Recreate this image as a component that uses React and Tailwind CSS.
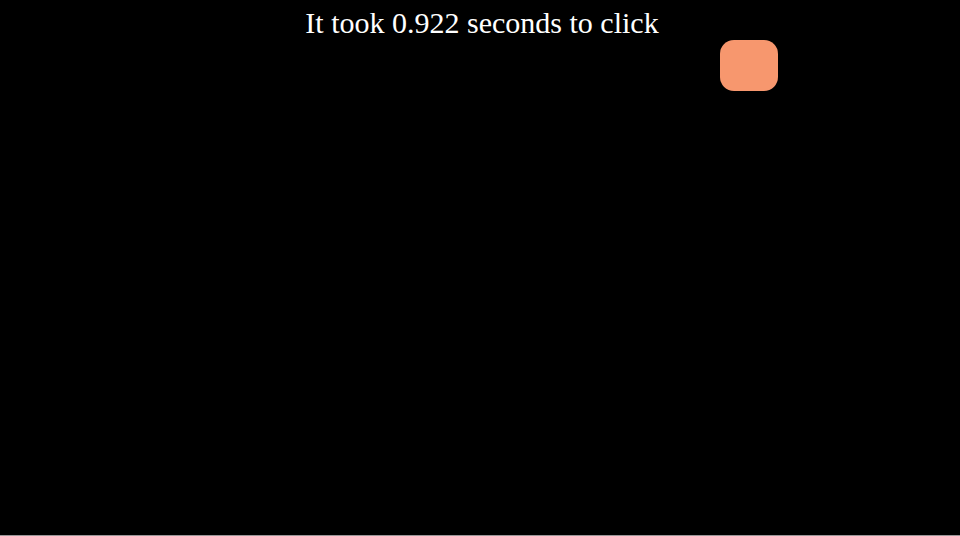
import { useRef, useState } from 'react';

const COLORS = ['#f7976e', '#6bb8f9', '#8bd17c', '#f2d45c', '#c78bf2'];

// left/top are fractions of the play area
const firstTarget = { left: 0.75, top: 0, color: COLORS[0] };

function nextTarget() {
  return {
    left: Math.random() * 0.9,
    top: Math.random() * 0.85,
    color: COLORS[Math.floor(Math.random() * COLORS.length)],
  };
}

export default function App() {
  const [target, setTarget] = useState(firstTarget);
  const [seconds, setSeconds] = useState(0.922);
  const shownAt = useRef(null);

  const handleClick = () => {
    const now = performance.now();
    if (shownAt.current !== null) setSeconds((now - shownAt.current) / 1000);
    shownAt.current = now;
    setTarget(nextTarget());
  };

  return (
    <main className="flex min-h-screen flex-col border-b border-[#9a9698] bg-black font-['Liberation_Serif',serif] text-white">
      <p className="pt-1.5 pl-1 text-center text-3xl leading-[34px]" aria-live="polite">
        It took {seconds.toFixed(3)} seconds to click
      </p>

      {/* Play area */}
      <div className="relative flex-1">
        <button
          type="button"
          aria-label="Target"
          onClick={handleClick}
          className="absolute h-[51px] w-[58px] cursor-pointer rounded-[14px]"
          style={{
            left: `${target.left * 100}%`,
            top: `${target.top * 100}%`,
            background: target.color,
          }}
        />
      </div>
    </main>
  );
}
